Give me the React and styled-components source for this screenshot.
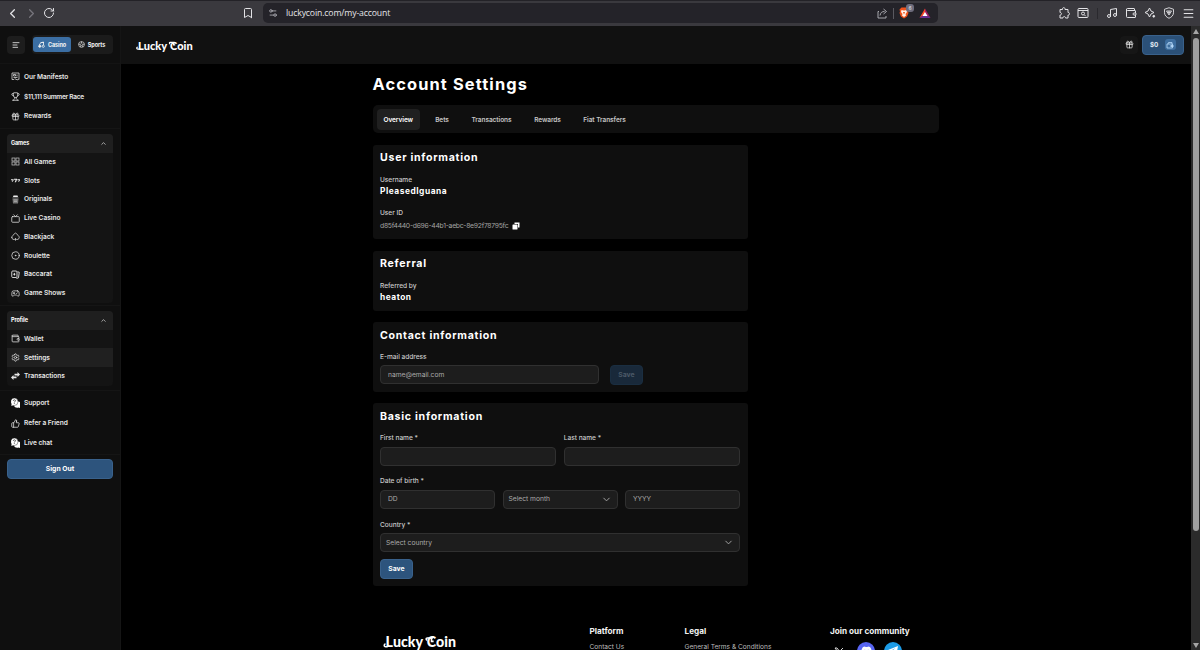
import React from 'react';
import styled, { createGlobalStyle, css } from 'styled-components';
import {
  ChevronLeft,
  ChevronRight,
  ChevronUp,
  ChevronDown,
  RotateCw,
  Bookmark,
  Settings2,
  Music,
  Wallet,
  Menu,
  Gift,
  Trophy,
  Tv,
  Spade,
  CircleDot,
  Gamepad2,
  Settings,
  ThumbsUp,
  AlignLeft,
} from 'lucide-react';

const GlobalStyle = createGlobalStyle`
  * {
    box-sizing: border-box;
  }

  body {
    margin: 0;
    background: #000000;
    font-family: Inter, 'Liberation Sans', sans-serif;
    color: #FFFFFF;
    overflow: hidden;
  }

  button, input {
    font-family: inherit;
    margin: 0;
  }

  svg {
    display: block;
    flex-shrink: 0;
  }
`;

const Window = styled.div`
  width: 1200px;
  height: 650px;
  display: flex;
  flex-direction: column;
  overflow: hidden;
`;

/* Browser bar */

const BrowserBar = styled.header`
  height: 26px;
  flex-shrink: 0;
  display: flex;
  align-items: center;
  padding-bottom: 1px;
  background: #3A393E;
  border-top: 1px solid #232227;
  color: #E3E3E6;
`;

const NavButtons = styled.div`
  display: flex;
  align-items: center;
  gap: 4px;
  width: 242px;
  padding-left: 5px;
`;

const AddressBar = styled.div`
  height: 20px;
  width: 675px;
  margin-left: 9px;
  padding: 0 7px 0 5px;
  display: flex;
  align-items: center;
  background: #242329;
  border-radius: 5px;
`;

const Url = styled.span`
  flex: 1;
  margin-left: 8px;
  font-family: 'Open Sans', sans-serif;
  font-size: 8.7px;
  letter-spacing: -0.15px;
  color: #E4E4E8;
`;

const BarDivider = styled.span`
  width: 1px;
  height: 11px;
  background: #5A5960;
`;

const AddressActions = styled.div`
  display: flex;
  align-items: center;
  gap: 5px;
`;

const Shield = styled.div`
  position: relative;
  margin: 0 5px 0 0;
`;

const ShieldBadge = styled.span`
  position: absolute;
  top: -3px;
  right: -5px;
  width: 8px;
  height: 8px;
  border-radius: 3px;
  background: #6D6C7C;
  font-size: 5px;
  line-height: 8px;
  text-align: center;
`;

const Extensions = styled.div`
  display: flex;
  align-items: center;
  gap: 7px;
  margin-left: auto;
  padding-right: 5.5px;

  ${BarDivider} {
    margin: 0 1px;
    background: #2A292E;
  }
`;

/* Page frame */

const Page = styled.div`
  flex: 1;
  min-height: 0;
  display: flex;
`;

const Sidebar = styled.aside`
  width: 121px;
  flex-shrink: 0;
  background: #0F0F0F;
  border-right: 1px solid #151515;
`;

const Content = styled.div`
  flex: 1;
  display: flex;
  flex-direction: column;
  overflow: hidden;
`;

const Scrollbar = styled.div`
  width: 9px;
  display: flex;
  flex-direction: column;
  align-items: center;
  justify-content: space-between;
  padding: 3px 0 2px 1px;
  background: #2B2B2B;
`;

const ScrollThumb = styled.div`
  width: 6px;
  height: 493px;
  margin: 4px 0 auto;
  border-radius: 3px;
  background: #9F9F9F;
`;

const Arrow = styled.div`
  border: 3px solid transparent;
  ${({ $down }) =>
    $down
      ? css`border-top: 5px solid #A5A5A5; border-bottom: 0;`
      : css`border-bottom: 5px solid #A5A5A5; border-top: 0;`}
`;

/* Sidebar */

const SidebarTop = styled.div`
  height: 38px;
  display: flex;
  align-items: center;
  gap: 7px;
  padding: 0 7px;
  border-bottom: 1px solid #141414;
`;

const SquareButton = styled.button`
  width: 18px;
  height: 18px;
  display: flex;
  align-items: center;
  justify-content: center;
  padding: 0;
  border: 0;
  border-radius: 4px;
  background: ${({ $bg }) => $bg || '#1D1D1D'};
  color: #E8E8E8;
`;

const Switcher = styled.div`
  width: 81px;
  height: 19px;
  padding: 2px 1px;
  display: flex;
  border-radius: 4px;
  background: #1B1B1B;
`;

const SwitchOption = styled.button`
  width: ${({ $active }) => ($active ? 38 : 41)}px;
  display: flex;
  align-items: center;
  justify-content: center;
  gap: 3px;
  padding: 0;
  border: 0;
  border-radius: 3px;
  background: ${({ $active }) => ($active ? '#3B6EA3' : 'transparent')};
  color: #F4F4F4;
  font-size: 5.5px;
  font-weight: 700;
  letter-spacing: -0.08px;
`;

const LinkGroup = styled.nav`
  height: ${({ $height }) => $height}px;
  padding: ${({ $top }) => $top}px 7px 0;
  border-bottom: 1px solid #151515;
`;

const Panel = styled.section`
  margin: ${({ $margin }) => $margin};
  border-radius: 4px;
  background: #141414;
  overflow: hidden;
`;

const PanelHeader = styled.div`
  height: 18.5px;
  display: flex;
  align-items: center;
  justify-content: space-between;
  padding: 0 6px 0 4px;
  background: #1F1F1F;
  font-size: 5.5px;
  font-weight: 700;
  letter-spacing: -0.1px;
`;

const SideLink = styled.a`
  height: ${({ $height }) => $height || 18.75}px;
  display: flex;
  align-items: center;
  gap: 4px;
  padding-left: 4px;
  background: ${({ $active }) => ($active ? '#202020' : 'transparent')};
  color: #E6E6E6;
  font-size: 6.6px;
  font-weight: 600;
  letter-spacing: ${({ $track }) => $track || -0.04}px;
  white-space: nowrap;
`;

const SideDivider = styled.div`
  height: 1px;
  background: #151515;
`;

const Button = styled.button`
  display: block;
  width: ${({ $wide }) => ($wide ? '106px' : '33px')};
  height: 20px;
  padding: 0 0 1px;
  border: 1px solid ${({ disabled }) => (disabled ? '#1A2E41' : '#39618B')};
  border-radius: 4px;
  background: ${({ disabled }) => (disabled ? '#19293A' : '#2D547D')};
  color: ${({ disabled }) => (disabled ? '#4C5A68' : '#FFFFFF')};
  font-size: 6.8px;
  font-weight: 700;
`;

const SignOutRow = styled.div`
  padding: 4.5px 7px;
`;

/* Header */

const TopBar = styled.header`
  height: 38px;
  flex-shrink: 0;
  display: flex;
  align-items: center;
  padding: 0 7px 0 17px;
  background: #111111;
`;

const Logo = styled.span`
  display: inline-flex;
  font-family: Lato, sans-serif;
  font-weight: 900;
  font-size: ${({ $size }) => $size}px;
  line-height: 1;
  color: #FFFFFF;
  white-space: pre;
`;

const Capital = styled.span`
  position: relative;
  margin-left: ${({ $space }) => $space || 0}em;
`;

const Flourish = styled.svg`
  position: absolute;
  left: -0.25em;
  top: 0;
  width: 1em;
  height: 1em;
`;

const TopActions = styled.div`
  display: flex;
  align-items: center;
  gap: 4px;
  margin: -1px 0 0 auto;
`;

const Balance = styled.button`
  width: 42px;
  height: 20px;
  display: flex;
  align-items: center;
  justify-content: space-between;
  padding: 0 7.5px 0 7px;
  border: 1px solid #39618B;
  border-radius: 4px;
  background: #2B5077;
  color: #E6EEF6;
  font-size: 6.3px;
  font-weight: 700;
`;

const BalanceIcon = styled.span`
  padding: 1.5px;
  border-radius: 3px;
  background: #3D6D9E;
  color: #B9DCFB;
`;

/* Account page */

const Main = styled.main`
  width: 566.5px;
  margin-left: 251.5px;
`;

const PageTitle = styled.h1`
  height: 41px;
  margin: 0;
  padding-top: 10px;
  font-size: 16.4px;
  line-height: 20px;
  font-weight: 700;
  letter-spacing: 1.12px;
`;

const Tabs = styled.div`
  height: 28px;
  display: flex;
  align-items: center;
  padding: 0 4px;
  gap: 0.5px;
  border-radius: 5px;
  background: #0F0F0F;
`;

const Tab = styled.button`
  width: ${({ $width }) => $width}px;
  height: 21px;
  padding: 1px 0 0;
  border: 0;
  border-radius: 4px;
  background: ${({ $active }) => ($active ? '#202020' : 'transparent')};
  color: ${({ $active }) => ($active ? '#FFFFFF' : '#C6C6C6')};
  font-size: 6.5px;
  font-weight: 600;
  letter-spacing: -0.06px;
`;

const Card = styled.section`
  width: 375px;
  height: ${({ $height }) => $height}px;
  margin-top: ${({ $gap }) => $gap || 11.5}px;
  padding: ${({ $top }) => $top || 5.5}px 7.5px 0;
  border-radius: 3px;
  background: #0F0F0F;
`;

const CardTitle = styled.h2`
  margin: 0 0 ${({ $bottom }) => $bottom || 10.5}px;
  font-size: 10.6px;
  line-height: 15px;
  font-weight: 700;
  letter-spacing: 0.72px;
`;

const Label = styled.label`
  display: block;
  font-size: 6.6px;
  line-height: 9px;
  font-weight: 500;
  letter-spacing: ${({ $track }) => $track || -0.03}px;
  color: #CACACA;
`;

const Value = styled.div`
  margin: 0.5px 0 10.5px;
  height: 13px;
  font-size: 8.4px;
  line-height: 13px;
  font-weight: 700;
  letter-spacing: 0.52px;
`;

const UserId = styled.div`
  display: flex;
  align-items: center;
  gap: 4px;
  margin-top: 3px;
  color: #A3A3A3;
  font-size: 6.8px;
  line-height: 10px;
  letter-spacing: -0.27px;
`;

const FieldRow = styled.div`
  display: flex;
  gap: ${({ $gap }) => $gap || 7.5}px;
  margin: ${({ $top }) => $top ?? 3.5}px 0 ${({ $bottom }) => $bottom ?? 11.5}px;
`;

const Column = styled.div`
  flex: 1;
  display: flex;
  flex-direction: column;
  gap: 3.5px;
`;

const fieldBox = css`
  flex: ${({ $width }) => ($width ? `0 0 ${$width}px` : '1 1 0')};
  width: 0;
  min-width: 0;
  height: 19.3px;
  border: 1px solid #303030;
  border-radius: 4px;
  background: #1D1D1D;
  color: #ABABAB;
  font-size: 6.7px;
`;

const Input = styled.input`
  ${fieldBox}
  padding: 0 7px;
  outline: none;

  &::placeholder {
    color: #ABABAB;
  }

  ${Column} & {
    flex: none;
    width: 100%;
  }
`;

const Select = styled.div`
  ${fieldBox}
  display: flex;
  align-items: center;
  justify-content: space-between;
  padding: 0 5px;
`;

/* Footer */

const Footer = styled.footer`
  display: flex;
  width: 566px;
  margin: 39.5px 0 0 252px;
`;

const FooterColumn = styled.div`
  width: ${({ $width }) => $width}px;
  padding-left: ${({ $inset }) => $inset || 0}px;
  padding-top: ${({ $top }) => $top || 0}px;
  font-size: 6.6px;
  color: #BDBDBD;
  white-space: nowrap;
`;

const FooterTitle = styled.h3`
  margin: 0 0 5.5px;
  font-size: 8.2px;
  line-height: 12px;
  font-weight: 700;
  color: #F2F2F2;
`;

const Socials = styled.div`
  display: flex;
  align-items: flex-start;
  gap: 9px;
  margin-top: -1px;
`;

const SocialDot = styled.span`
  width: 18px;
  height: 18px;
  display: flex;
  align-items: center;
  justify-content: center;
  border-radius: 50%;
  background: ${({ $bg }) => $bg};
`;

const PuzzleIcon = () => (
  <svg width="12" height="12" viewBox="0 0 24 24" fill="none" stroke="currentColor" strokeWidth="2" strokeLinejoin="round">
    <path d="M4 5h5c-1-5 6-5 5 0h6v6c4-1 4 6 0 5v6h-5c0-4-5-4-5 0H4v-6c4 0 4-5 0-5z" />
  </svg>
);

const ShareIcon = () => (
  <svg width="11" height="11" viewBox="0 0 22 22" fill="none" stroke="#B5B5BC" strokeWidth="1.8">
    <path d="M4 7H2v13h16v-4" />
    <path d="M6 15c1-6 4-8 9-8M13 2l6 5-6 5" />
  </svg>
);

const BraveIcon = () => (
  <svg width="10" height="12" viewBox="0 0 20 24">
    <path d="M5 1h10l4 4-1 4 1 3-3 7-6 4-6-4-3-7 1-3-1-4z" fill="#F0531C" />
    <path d="M5 6l4 1h2l4-1 1 4-3 4 1 3-4 3-4-3 1-3-3-4z" fill="#FFF3EC" />
    <path d="M8 10l2 5 2-5z" fill="#F0531C" />
  </svg>
);

const RewardsIcon = () => (
  <svg width="12" height="11" viewBox="0 0 24 22">
    <path d="M12 1L1 20l11-7z" fill="#FF4724" />
    <path d="M12 1l11 19-11-7z" fill="#9E1F63" />
    <path d="M1 20h22l-11-8z" fill="#662D91" />
    <path d="M12 8l5 8H7z" fill="#FFFFFF" />
  </svg>
);

const SearchTabIcon = () => (
  <svg width="12" height="12" viewBox="0 0 24 24" fill="none" stroke="currentColor" strokeWidth="2">
    <rect x="2" y="3" width="20" height="18" rx="2" />
    <path d="M2 7h20M14.5 15.5l3 3" />
    <circle cx="12" cy="13" r="3" />
  </svg>
);

const SparkIcon = () => (
  <svg width="12" height="12" viewBox="0 0 24 24" fill="none" stroke="currentColor" strokeWidth="2" strokeLinejoin="round">
    <path d="M11 2l3 6 6 3-6 3-3 6-3-6-6-3 6-3z" />
    <circle cx="19.5" cy="18.5" r="1.8" fill="currentColor" />
  </svg>
);

const VpnIcon = () => (
  <svg width="12" height="12" viewBox="0 0 24 24" fill="none" stroke="currentColor" strokeWidth="1.8" strokeLinejoin="round">
    <path d="M12 1.5l9 3v7c0 5-4 9-9 11-5-2-9-6-9-11v-7z" />
    <path d="M7 8h10l-5 8z" />
    <path d="M10 10h4l-2 3z" />
  </svg>
);

const ManifestoIcon = () => (
  <svg width="9" height="9" viewBox="0 0 18 18" fill="none" stroke="currentColor" strokeWidth="1.5">
    <path d="M6 15H2V2h14v13" />
    <path d="M5 5h4v3H5zM12 5v4M5 11h8M7 14h3l2 2 4-2" />
  </svg>
);

const GridIcon = () => (
  <svg width="9" height="9" viewBox="0 0 18 18" fill="none" stroke="#C9C9C9" strokeWidth="1.4">
    <rect x="2" y="2" width="6" height="6" />
    <rect x="10" y="2" width="6" height="6" />
    <rect x="2" y="10" width="6" height="6" />
    <rect x="10" y="10" width="6" height="6" />
  </svg>
);

const SlotsIcon = () => (
  <svg width="9" height="5" viewBox="0 0 27 12" fill="currentColor">
    <path d="M0 2h8v3L5 10H2l3-5H0zM9 1h9v3l-3 7h-4l3-7H9zM19 2h8v3l-3 5h-3l3-5h-5z" />
  </svg>
);

const OriginalsIcon = () => (
  <svg width="9" height="9" viewBox="0 0 18 18" fill="none">
    <path d="M5 1h8l1 3H4z" fill="#F0F0F0" />
    <path d="M3 5h12v2H3z" fill="#8E8E8E" />
    <path d="M3 8h12l-1 9H4z" fill="#777777" />
    <path d="M6 10h6M6 13h6" stroke="#C8C8C8" />
  </svg>
);

const BaccaratIcon = () => (
  <svg width="9" height="9" viewBox="0 0 18 18" fill="none" stroke="currentColor" strokeWidth="1.8">
    <rect x="1.5" y="2" width="10.5" height="13" rx="2" />
    <path d="M13 3.5l3.5 1-1.5 11-4 1.5" />
    <path d="M6.7 5.5L9 8.5l-2.3 3-2.3-3z" fill="currentColor" stroke="none" />
  </svg>
);

const TransferIcon = () => (
  <svg width="9" height="8" viewBox="0 0 18 16" fill="currentColor">
    <path d="M7 3.5h6V0l5 5-5 5V7H7zM11 9v3.500H5V16l-5-5 5-5v3z" />
  </svg>
);

const ChatIcon = () => (
  <svg width="9" height="10" viewBox="1 0 18 20">
    <path d="M12 7h4c2 0 4 2 4 5 0 2-1 3-1 4l1 4-4-1c-4 1-8 0-9-4z" fill="#FFFFFF" />
    <path d="M7.5 0a7.5 7.5 0 0 1 0 15L1 16l.8-4A7.5 7.5 0 0 1 7.5 0z" fill="#FFFFFF" stroke="#0F0F0F" strokeWidth="0.8" />
    <path d="M5.5 6c0-3 4.5-3 4.5-.5 0 1.5-2.3 1.5-2.3 3.5M7.7 10.5v1.5" fill="none" stroke="#0F0F0F" strokeWidth="1.4" />
  </svg>
);

const CasinoIcon = () => (
  <svg width="7" height="7" viewBox="0 0 14 14" fill="none" stroke="currentColor" strokeWidth="1.6">
    <path d="M3 8c0-3 3-5 8-6v6M5 3h7" />
    <circle cx="3.5" cy="10.5" r="2.2" fill="currentColor" />
    <circle cx="10.5" cy="10.5" r="2.2" />
  </svg>
);

const SportsIcon = () => (
  <svg width="7" height="7" viewBox="0 0 14 14" fill="none" stroke="currentColor" strokeWidth="1.2">
    <circle cx="7" cy="7" r="5.8" />
    <path d="M7 4.5l2.5 2-1 3h-3l-1-3zM7 1v3M13 6l-3 1M10 12l-1.5-2M4 12l1.5-2M1 6l3 1" />
  </svg>
);

const PurseIcon = () => (
  <svg width="8" height="8" viewBox="0 0 16 16" fill="none" stroke="currentColor" strokeWidth="1.5">
    <path d="M2 6h11v8H2zM4 6l1-3h7v3" />
    <rect x="9.5" y="8.5" width="5" height="3" rx="1" fill="currentColor" />
  </svg>
);

const CopyIcon = () => (
  <svg width="8" height="8" viewBox="0 0 16 16">
    <path d="M5 1h10v10h-3V4H5z" fill="#FFFFFF" />
    <rect x="1" y="5" width="10" height="10" rx="1" fill="#FFFFFF" />
  </svg>
);

const XIcon = () => (
  <svg width="18" height="18" viewBox="0 0 18 18" fill="none" stroke="#D5D5D5" strokeWidth="1">
    <path d="M5 6h2l6 8h-2zM13 6l-8 8" />
  </svg>
);

const DiscordIcon = () => (
  <svg width="11" height="9" viewBox="0 0 22 18">
    <path d="M4 2l4-1 1 1h4l1-1 4 1c3 4 4 8 3 12l-5 3-1-3H7l-1 3-5-3C0 10 1 6 4 2z" fill="#FFFFFF" />
    <circle cx="7.5" cy="9.5" r="2" fill="#5865F2" />
    <circle cx="14.5" cy="9.5" r="2" fill="#5865F2" />
  </svg>
);

const TelegramIcon = () => (
  <svg width="10" height="9" viewBox="0 0 20 18">
    <path d="M0 8L20 0l-3 17-6-4-3 3-1-5 8-7-10 6z" fill="#FFFFFF" />
  </svg>
);

const games = [
  { label: 'All Games', icon: <GridIcon /> },
  { label: 'Slots', icon: <SlotsIcon /> },
  { label: 'Originals', icon: <OriginalsIcon /> },
  { label: 'Live Casino', icon: <Tv size={9} /> },
  { label: 'Blackjack', icon: <Spade size={9} /> },
  { label: 'Roulette', icon: <CircleDot size={9} /> },
  { label: 'Baccarat', icon: <BaccaratIcon /> },
  { label: 'Game Shows', icon: <Gamepad2 size={9} /> },
];

const profile = [
  { label: 'Wallet', icon: <Wallet size={9} /> },
  { label: 'Settings', icon: <Settings size={9} />, active: true },
  { label: 'Transactions', icon: <TransferIcon /> },
];

const tabs = [
  { label: 'Overview', width: 43.5 },
  { label: 'Bets', width: 43 },
  { label: 'Transactions', width: 55 },
  { label: 'Rewards', width: 56 },
  { label: 'Fiat Transfers', width: 57 },
];

const LogoText = ({ size }) => (
  <Logo $size={size}>
    <Capital>
      L
      <Flourish viewBox="0 0 20 20" fill="none" stroke="#FFFFFF" strokeWidth="2.2">
        <path d="M8 16.500H5C2.500 16.500 2.500 13 5 12.800" />
      </Flourish>
    </Capital>
    {'ucky '}
    <Capital $space={0.04}>
      C
      <Flourish viewBox="0 0 20 20" fill="none" stroke="#FFFFFF" strokeWidth="2.2">
        <path d="M14 4.200H6C3.800 4.200 3.800 7 6 7.500M12 5v4h3" />
      </Flourish>
    </Capital>
    oin
  </Logo>
);

const Browser = () => (
  <BrowserBar>
    <NavButtons>
      <ChevronLeft size={15} />
      <ChevronRight size={15} color="#77767D" />
      <RotateCw size={12} />
    </NavButtons>
    <Bookmark size={12} />
    <AddressBar>
      <Settings2 size={10} color="#B5B5BC" />
      <Url>luckycoin.com/my-account</Url>
      <AddressActions>
        <ShareIcon />
        <BarDivider />
        <Shield>
          <BraveIcon />
          <ShieldBadge>6</ShieldBadge>
        </Shield>
        <RewardsIcon />
      </AddressActions>
    </AddressBar>
    <Extensions>
      <PuzzleIcon />
      <SearchTabIcon />
      <BarDivider />
      <Music size={12} />
      <Wallet size={12} />
      <SparkIcon />
      <VpnIcon />
      <Menu size={13} />
    </Extensions>
  </BrowserBar>
);

const SideMenu = () => (
  <Sidebar>
    <SidebarTop>
      <SquareButton>
        <AlignLeft size={8} strokeWidth={2.5} />
      </SquareButton>
      <Switcher>
        <SwitchOption $active>
          <CasinoIcon />
          Casino
        </SwitchOption>
        <SwitchOption>
          <SportsIcon />
          Sports
        </SwitchOption>
      </Switcher>
    </SidebarTop>
    <LinkGroup $height={65} $top={3}>
      <SideLink $height={19.7} $track={-0.08}><ManifestoIcon />Our Manifesto</SideLink>
      <SideLink $height={19.7} $track={-0.3}><Trophy size={9} />$11,111 Summer Race</SideLink>
      <SideLink $height={19.7}><Gift size={9} />Rewards</SideLink>
    </LinkGroup>
    <Panel $margin="5px 7px 2px">
      <PanelHeader>
        Games
        <ChevronUp size={7} />
      </PanelHeader>
      {games.map((item) => (
        <SideLink key={item.label}>{item.icon}{item.label}</SideLink>
      ))}
    </Panel>
    <SideDivider />
    <Panel $margin="5.5px 7px 4px">
      <PanelHeader>
        Profile
        <ChevronUp size={7} />
      </PanelHeader>
      {profile.map((item) => (
        <SideLink key={item.label} $active={item.active}>{item.icon}{item.label}</SideLink>
      ))}
    </Panel>
    <SideDivider />
    <LinkGroup $height={64} $top={2.8}>
      <SideLink $height={19.7}><ChatIcon />Support</SideLink>
      <SideLink $height={19.7}><ThumbsUp size={9} />Refer a Friend</SideLink>
      <SideLink $height={19.7}><ChatIcon />Live chat</SideLink>
    </LinkGroup>
    <SignOutRow>
      <Button $wide>Sign Out</Button>
    </SignOutRow>
  </Sidebar>
);

const App = () => (
  <Window>
    <GlobalStyle />
    <Browser />
    <Page>
      <SideMenu />
      <Content>
        <TopBar>
          <LogoText size={11} />
          <TopActions>
            <SquareButton $bg="#161616">
              <Gift size={9} />
            </SquareButton>
            <Balance>
              $0
              <BalanceIcon>
                <PurseIcon />
              </BalanceIcon>
            </Balance>
          </TopActions>
        </TopBar>

        <Main>
          <PageTitle>Account Settings</PageTitle>
          <Tabs>
            {tabs.map((tab, i) => (
              <Tab key={tab.label} $width={tab.width} $active={i === 0}>{tab.label}</Tab>
            ))}
          </Tabs>

          <Card $height={94} $gap={12} $top={4.8}>
            <CardTitle $bottom={11.2}>User information</CardTitle>
            <Label $track={-0.05}>Username</Label>
            <Value>PleasedIguana</Value>
            <Label>User ID</Label>
            <UserId>
              d85f4440-d696-44b1-aebc-8e92f78795fc
              <CopyIcon />
            </UserId>
          </Card>

          <Card $height={60}>
            <CardTitle>Referral</CardTitle>
            <Label>Referred by</Label>
            <Value>heaton</Value>
          </Card>

          <Card $height={70}>
            <CardTitle $bottom={10.5}>Contact information</CardTitle>
            <Label>E-mail address</Label>
            <FieldRow $gap={11} $top={3.2}>
              <Input $width={219} placeholder="name@email.com" />
              <Button disabled>Save</Button>
            </FieldRow>
          </Card>

          <Card $height={182.5} $gap={11}>
            <CardTitle>Basic information</CardTitle>
            <FieldRow $top={0}>
              <Column>
                <Label>First name *</Label>
                <Input />
              </Column>
              <Column>
                <Label>Last name *</Label>
                <Input />
              </Column>
            </FieldRow>
            <Label>Date of birth *</Label>
            <FieldRow>
              <Input $width={115} placeholder="DD" />
              <Select $width={115}>
                Select month
                <ChevronDown size={11} />
              </Select>
              <Input $width={115} placeholder="YYYY" />
            </FieldRow>
            <Label>Country *</Label>
            <FieldRow $bottom={6.5}>
              <Select>
                Select country
                <ChevronDown size={11} />
              </Select>
            </FieldRow>
            <Button>Save</Button>
          </Card>
        </Main>

        <Footer>
          <FooterColumn $width={216.5} $inset={12.5} $top={9.5}>
            <LogoText size={14.2} />
          </FooterColumn>
          <FooterColumn $width={95}>
            <FooterTitle>Platform</FooterTitle>
            Contact Us
          </FooterColumn>
          <FooterColumn $width={145.5}>
            <FooterTitle>Legal</FooterTitle>
            General Terms &amp; Conditions
          </FooterColumn>
          <FooterColumn $width={100}>
            <FooterTitle>Join our community</FooterTitle>
            <Socials>
              <XIcon />
              <SocialDot $bg="#5865F2"><DiscordIcon /></SocialDot>
              <SocialDot $bg="#1C9BE6"><TelegramIcon /></SocialDot>
            </Socials>
          </FooterColumn>
        </Footer>
      </Content>
      <Scrollbar>
        <Arrow />
        <ScrollThumb />
        <Arrow $down />
      </Scrollbar>
    </Page>
  </Window>
);

export default App;
